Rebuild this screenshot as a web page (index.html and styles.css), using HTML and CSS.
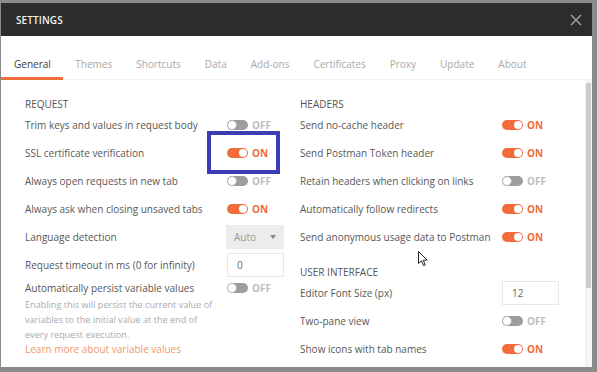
FILE: index.html
```html
<!DOCTYPE html>
<html>
<head>
<meta charset="utf-8">
<link rel="stylesheet" href="styles.css">
</head>
<body>
<div class="modal">
  <div class="modal-header">
    <span class="title">SETTINGS</span>
    <svg class="close" width="12" height="12" viewBox="0 0 12 12"><path d="M1 1 L11 11 M11 1 L1 11" stroke="#9c9c9c" stroke-width="1.6" fill="none"/></svg>
  </div>
  <div class="tabs">
    <div class="tab active">General</div>
    <div class="tab">Themes</div>
    <div class="tab">Shortcuts</div>
    <div class="tab">Data</div>
    <div class="tab">Add-ons</div>
    <div class="tab">Certificates</div>
    <div class="tab">Proxy</div>
    <div class="tab">Update</div>
    <div class="tab">About</div>
  </div>
  <div class="body">
    <div class="content">
      <div class="col">
        <div class="heading">REQUEST</div>
        <div class="row"><span class="label">Trim keys and values in request body</span><span class="ctl"><span class="toggle off"></span><span class="state off">OFF</span></span></div>
        <div class="row"><span class="label">SSL certificate verification</span><span class="ctl"><span class="toggle on"></span><span class="state on">ON</span></span></div>
        <div class="row"><span class="label">Always open requests in new tab</span><span class="ctl"><span class="toggle off"></span><span class="state off">OFF</span></span></div>
        <div class="row"><span class="label">Always ask when closing unsaved tabs</span><span class="ctl"><span class="toggle on"></span><span class="state on">ON</span></span></div>
        <div class="row"><span class="label">Language detection</span><span class="ctl"><span class="select">Auto<span class="caret"></span></span></span></div>
        <div class="row"><span class="label">Request timeout in ms (0 for infinity)</span><span class="ctl"><span class="input">0</span></span></div>
        <div class="row short"><span class="label">Automatically persist variable values</span><span class="ctl"><span class="toggle off"></span><span class="state off">OFF</span></span></div>
        <div class="desc">Enabling this will persist the current value of variables to the initial value at the end of every request execution.</div>
        <div class="link">Learn more about variable values</div>
      </div>
      <div class="col">
        <div class="heading">HEADERS</div>
        <div class="row"><span class="label">Send no-cache header</span><span class="ctl"><span class="toggle on"></span><span class="state on">ON</span></span></div>
        <div class="row"><span class="label">Send Postman Token header</span><span class="ctl"><span class="toggle on"></span><span class="state on">ON</span></span></div>
        <div class="row"><span class="label">Retain headers when clicking on links</span><span class="ctl"><span class="toggle off"></span><span class="state off">OFF</span></span></div>
        <div class="row"><span class="label">Automatically follow redirects</span><span class="ctl"><span class="toggle on"></span><span class="state on">ON</span></span></div>
        <div class="row"><span class="label">Send anonymous usage data to Postman</span><span class="ctl"><span class="toggle on"></span><span class="state on">ON</span></span></div>
        <div class="heading second">USER INTERFACE</div>
        <div class="row"><span class="label">Editor Font Size (px)</span><span class="ctl"><span class="input">12</span></span></div>
        <div class="row"><span class="label">Two-pane view</span><span class="ctl"><span class="toggle off"></span><span class="state off">OFF</span></span></div>
        <div class="row"><span class="label">Show icons with tab names</span><span class="ctl"><span class="toggle on"></span><span class="state on">ON</span></span></div>
      </div>
    </div>
    <div class="scrollbar"><div class="thumb"></div></div>
  </div>
</div>
<div class="highlight"></div>
<svg class="cursor" width="10" height="16" viewBox="0 0 10 16"><path d="M0.5 0.5 L0.5 12.5 L3.5 9.8 L5.6 14.6 L7.3 13.9 L5.3 9.2 L9.2 9.2 Z" fill="#fff" stroke="#222" stroke-width="1" stroke-linejoin="round"/></svg>
</body>
</html>
```
FILE: styles.css
```css
html, body {
  margin: 0;
  padding: 0;
}
body {
  width: 597px;
  height: 372px;
  background: #8b8b8b;
  font-family: "Open Sans", "DejaVu Sans", sans-serif;
  overflow: hidden;
  position: relative;
  padding-top: 3px;
  padding-left: 1px;
  box-sizing: border-box;
}
.modal {
  width: 591px;
  height: 364px;
  background: #fff;
  display: flex;
  flex-direction: column;
  overflow: hidden;
}
.modal-header {
  height: 33px;
  flex: none;
  background: #2c2c2c;
  display: flex;
  align-items: center;
  justify-content: space-between;
  padding: 0 10px 0 15px;
}
.title {
  color: #f2f2f2;
  font-size: 10px;
  font-weight: 600;
  letter-spacing: 0.1px;
}
.close {
  display: block;
}
.tabs {
  flex: none;
  display: flex;
  height: 43px;
  border-bottom: 1px solid #efefef;
}
.tab {
  height: 44px;
  box-sizing: border-box;
  padding: 20px 12px 5px;
  line-height: 16px;
  font-size: 10px;
  color: #a9a9a9;
  border-bottom: 3px solid transparent;
}
.tab.active {
  color: #3a3a3a;
  border-bottom-color: #f26b3a;
  padding-left: 13px;
  padding-right: 12.5px;
}
.body {
  flex: 1;
  display: flex;
  min-height: 0;
}
.content {
  flex: 1;
  display: grid;
  grid-template-columns: 260px 260px;
  column-gap: 15px;
  padding: 0 0 0 24px;
  align-content: start;
}
.col {
  display: flex;
  flex-direction: column;
}
.heading {
  font-size: 10px;
  color: #555;
  line-height: 14px;
  padding-top: 17px;
}
.heading.second {
  padding-top: 14px;
}
.row {
  height: 28px;
  display: flex;
  align-items: center;
  font-size: 10px;
  color: #575757;
}
.row.short {
  height: 18px;
}
.label {
  width: 201px;
  flex: none;
  white-space: nowrap;
}
.ctl {
  display: flex;
  align-items: center;
}
.toggle {
  width: 21px;
  height: 10px;
  border-radius: 5px;
  margin-left: 1px;
  display: flex;
  align-items: center;
  box-sizing: border-box;
  padding: 0 1px;
}
.toggle::after {
  content: "";
  width: 8px;
  height: 8px;
  border-radius: 50%;
  background: #fff;
}
.toggle.on {
  background: #f26b3a;
  justify-content: flex-end;
}
.toggle.off {
  background: #9d9d9d;
  justify-content: flex-start;
  padding: 0;
}
.toggle.off::after {
  width: 8px;
  height: 8px;
  border: 1px solid #b4b4b4;
}
.state {
  font-size: 10px;
  font-weight: 700;
  margin-left: 4px;
}
.state.on {
  color: #f26b3a;
}
.state.off {
  color: #bdbdbd;
}
.select {
  width: 58px;
  height: 24px;
  background: #ececec;
  color: #9a9a9a;
  font-size: 10px;
  display: flex;
  align-items: center;
  padding-left: 8px;
  box-sizing: border-box;
}
.caret {
  width: 0;
  height: 0;
  border-left: 3.5px solid transparent;
  border-right: 3.5px solid transparent;
  border-top: 4px solid #888;
  margin-left: 14px;
}
.input {
  width: 57px;
  height: 24px;
  margin-left: 1px;
  border: 1px solid #e8e8e8;
  box-sizing: border-box;
  color: #666;
  font-size: 10px;
  display: flex;
  align-items: center;
  padding-left: 9px;
}
.desc {
  font-size: 9.1px;
  line-height: 15px;
  color: #ababab;
  width: 195px;
}
.link {
  font-size: 10px;
  line-height: 15px;
  color: #ef9a6a;
}
.scrollbar {
  width: 7px;
  flex: none;
  background: #f6f6f6;
  border-left: 1px solid #f0f0f0;
  padding-top: 3px;
  box-sizing: border-box;
}
.thumb {
  height: 205px;
  width: 5px;
  background: #cbcbcb;
}
.highlight {
  position: absolute;
  left: 207px;
  top: 131px;
  width: 73px;
  height: 43px;
  border: 4px solid #3b3db2;
  box-sizing: border-box;
}
.cursor {
  position: absolute;
  left: 418px;
  top: 251px;
}
```
